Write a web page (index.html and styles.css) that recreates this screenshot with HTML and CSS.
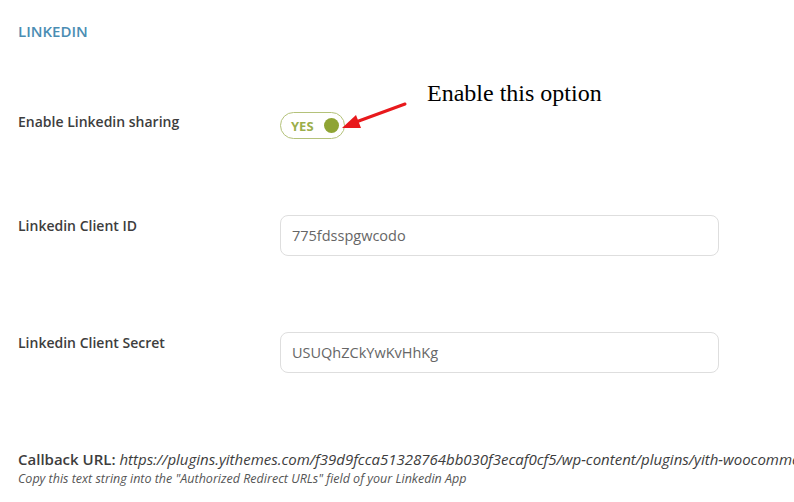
FILE: index.html
```html
<!DOCTYPE html>
<html lang="en">
<head>
    <meta charset="UTF-8">
    <meta name="viewport" content="width=device-width, initial-scale=1.0">
    <title>Linkedin settings</title>
    <link rel="stylesheet" href="styles.css">
</head>
<body>
    <div class="panel">
        <h2 class="section-title">LINKEDIN</h2>

        <div class="row row-toggle">
            <label class="label">Enable Linkedin sharing</label>
            <div class="field">
                <span class="toggle"><span class="toggle-text">YES</span><span class="toggle-dot"></span></span>
                <svg class="arrow" width="70" height="34" viewBox="0 0 70 34">
                    <line x1="63" y1="4" x2="14" y2="22" stroke="#e8191c" stroke-width="3" stroke-linecap="round"/>
                    <polygon points="0,28 14,15 19,28" fill="#e8191c"/>
                </svg>
                <span class="note">Enable this option</span>
            </div>
        </div>

        <div class="row">
            <label class="label">Linkedin Client ID</label>
            <div class="field">
                <input class="text-input" type="text" value="775fdsspgwcodo">
            </div>
        </div>

        <div class="row">
            <label class="label">Linkedin Client Secret</label>
            <div class="field">
                <input class="text-input" type="text" value="USUQhZCkYwKvHhKg">
            </div>
        </div>

        <div class="callback">
            <p class="callback-url"><strong>Callback URL:</strong> <em>https://plugins.yithemes.com/f39d9fcca51328764bb030f3ecaf0cf5/wp-content/plugins/yith-woocomme</em></p>
            <p class="callback-desc">Copy this text string into the "Authorized Redirect URLs" field of your Linkedin App</p>
        </div>
    </div>
</body>
</html>
```

FILE: styles.css
```css
body {
    margin: 0;
    background: #fff;
    font-family: 'Open Sans', 'Noto Sans', sans-serif;
    color: #3c3c3c;
    overflow: hidden;
}
.panel {
    padding: 21px 0 0 18px;
}
.section-title {
    margin: 0;
    font-size: 15px;
    font-weight: 600;
    color: #4a8db3;
    line-height: 20px;
}
.row {
    display: flex;
    align-items: flex-start;
    height: 117px;
}
.row-toggle {
    margin-top: 61px;
    height: 113px;
}
.label {
    width: 262px;
    font-size: 14px;
    font-weight: 600;
    color: #3d3d3d;
    line-height: 20px;
    padding-top: 1px;
}
.row-toggle .label {
    padding-top: 10px;
}
.field {
    display: flex;
    align-items: flex-start;
    position: relative;
}
.toggle {
    display: flex;
    align-items: center;
    justify-content: space-between;
    box-sizing: border-box;
    width: 65px;
    height: 27px;
    margin-top: 10px;
    padding: 0 5px 0 10px;
    border: 1.5px solid #b4c27a;
    border-radius: 14px;
}
.toggle-text {
    font-size: 13px;
    font-weight: 700;
    color: #9bae4a;
}
.toggle-dot {
    width: 15px;
    height: 15px;
    border-radius: 50%;
    background: #8fa434;
}
.arrow {
    position: absolute;
    left: 62px;
    top: -2px;
}
.note {
    position: absolute;
    left: 147px;
    top: -22px;
    white-space: nowrap;
    font-family: 'Liberation Serif', serif;
    font-size: 24px;
    color: #000;
}
.text-input {
    box-sizing: border-box;
    width: 439px;
    height: 41px;
    padding: 0 11px;
    border: 1.5px solid #dedede;
    border-radius: 8px;
    font-family: 'Open Sans', 'Noto Sans', sans-serif;
    font-size: 14.5px;
    color: #666;
    outline: none;
}
.callback {
    margin-top: 0;
    white-space: nowrap;
}
.callback p {
    margin: 0;
}
.callback-url {
    font-size: 15px;
    line-height: 21px;
    color: #3d3d3d;
}
.callback-url strong {
    font-weight: 600;
}
.callback-desc {
    font-size: 12.5px;
    font-style: italic;
    line-height: 18px;
    color: #555;
}
```
